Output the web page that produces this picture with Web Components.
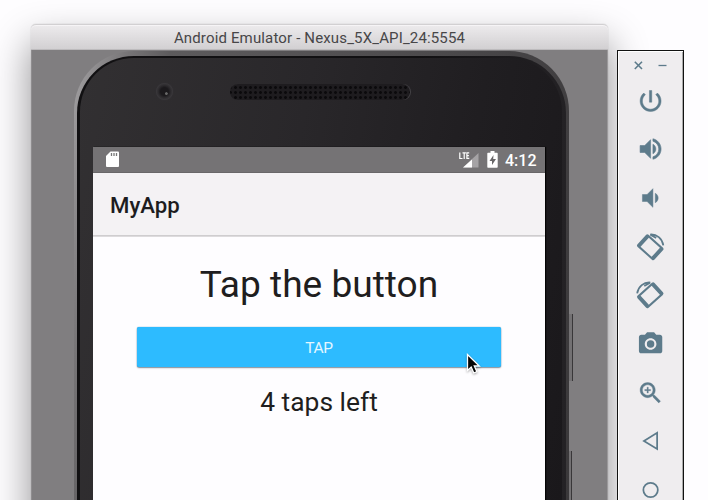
<!DOCTYPE html>
<html lang="en"><head><meta charset="utf-8"><title>Android Emulator</title>
<style>
html,body{margin:0;height:500px;overflow:hidden;background:#fefdff;font-family:Roboto,"Liberation Sans",sans-serif}
</style></head><body>
<emulator-desktop>
<emulator-window slot="window" heading="Android Emulator - Nexus_5X_API_24:5554">
<phone-device><status-bar slot="screen" time="4:12"></status-bar><app-bar slot="screen">MyApp</app-bar><tap-view slot="screen"></tap-view></phone-device>
</emulator-window>
<emulator-toolbar slot="tools"></emulator-toolbar>
<mouse-pointer slot="pointer"></mouse-pointer>
</emulator-desktop>
<script>
function define(name, html, setup){
  customElements.define(name, class extends HTMLElement{
    constructor(){super();const t=document.createElement('template');t.innerHTML=html;this.attachShadow({mode:'open'}).append(t.content.cloneNode(true));}
    connectedCallback(){if(setup)setup(this,this.shadowRoot);}
  });
}
define('emulator-desktop',`<style>
:host{display:flex;align-items:flex-start;gap:9px;box-sizing:border-box;width:708px;height:500px;padding:24px 0 0 31px;overflow:hidden;position:relative;background:#fefdff}
.tools{margin-top:26px;position:relative;z-index:1}
</style><slot name="window"></slot><div class="tools"><slot name="tools"></slot></div><slot name="pointer"></slot>`);

define('emulator-window',`<style>
:host{display:flex;flex-direction:column;flex:none;width:577px;height:620px;border-radius:5px 5px 0 0;box-shadow:0 0 1px #0005,0 19px 38px 1px #0000006b}
header{height:26px;box-sizing:border-box;border-top:1px solid #d2d0d2;border-bottom:1px solid #bdbbbd;border-radius:5px 5px 0 0;background:linear-gradient(#edebed,#d2d0d2);box-shadow:inset 0 1px #f6f4f6;display:flex;justify-content:center;align-items:center;padding-top:2px;color:#474648;font-size:15px;letter-spacing:.15px;white-space:nowrap}
main{flex:1;background:#807e80;display:flex;padding:1px 0 0 43px;box-shadow:inset 1px 0 #8f8d8f,inset -1px 0 #9b999b}
</style><header><span></span></header><main><slot></slot></main>`,(e,r)=>r.querySelector('span').textContent=e.getAttribute('heading'));

define('phone-device',`<style>
:host{display:block;width:495px;height:590px;position:relative}
.rim{box-sizing:border-box;height:100%;padding:5px 3px 0 3px;border-radius:60px 60px 0 0;background:linear-gradient(100deg,#a3a1a3 0,#777577 9%,#5d5b5d 16%,#4c4a4c 60%,#383638)}
.edge{box-sizing:border-box;height:100%;padding:2px 4px 0 3px;background:linear-gradient(90deg,#111012 0 70%,#242225);border-radius:57px 57px 0 0}
.face{box-sizing:border-box;height:100%;background:linear-gradient(100deg,#323032,#29272a 40%,#201e21 70%,#19171a);border-radius:54px 54px 0 0;display:flex;flex-direction:column}
.sensors{height:89px;flex:none;display:flex;align-items:flex-start;padding:24px 0 0 75px;box-sizing:border-box}
.camera{width:19px;height:19px;border-radius:50%;background:radial-gradient(circle at 60% 61%,#666 0 1px,#0000 1.7px),radial-gradient(circle,#1b191c 0 4px,#2b292c 6px,#383639 8px,#302e31 9px);margin-right:56px}
.speaker{width:180px;height:16px;margin-top:2px;border-radius:8px;background:radial-gradient(circle,#0b0a0c 1px,#0000 1.8px) 3px 1px/5px 5px,#1e1c1f;box-shadow:1px 0 #444246}
.screen{display:flex;flex-direction:column;flex:1;margin:0 17px 0 13px;background:#fefdff;box-shadow:1px 0 1px #050505}
.key{position:absolute;box-sizing:border-box;left:495px;width:4px;background:#737173;border-right:1px solid #393739}
.a{top:263px;height:67px}.b{top:400px;height:190px;width:3px}
</style><div class="rim"><div class="edge"><div class="face"><div class="sensors"><div class="camera"></div><div class="speaker"></div></div><div class="screen"><slot name="screen"></slot></div></div></div></div><i class="key a"></i><i class="key b"></i>`);

define('status-bar',`<style>
:host{display:flex;align-items:center;height:26px;box-sizing:border-box;padding:0 9px 0 13px;background:#757375;color:#fff;border-bottom:1px solid #696769}
svg{display:block;flex:none}.space{flex:1}.bat{margin:0 7px 0 8px}span{font-size:16px;font-weight:500;line-height:26px;padding-top:2px;margin-right:-.5px}
</style>
<svg width="13" height="17" viewBox="0 0 13 17"><path d="M4.500.5H12q1 0 1 1V15q0 1-1 1H1q-1 0-1-1V5Z" fill="#fff"/><path d="M5.500 2v3M8 2v3M10.500 2v3" stroke="#777" stroke-width="1.300"/></svg>
<div class="space"></div>
<svg width="20" height="18" viewBox="0 0 20 18"><path d="M19.500 2v14.500H4Z" fill="#a5a3a5"/><path d="M13 8.500V16.500H4Z" fill="#fff"/><path d="M.8 1.500v6h2.700M3.500 1.900h3.400M5.200 1.900v6M10.200 1.900H7.900v5.500h2.400M7.900 4.600h2" fill="none" stroke="#fff" stroke-width="1.200"/></svg>
<svg class="bat" width="11" height="17" viewBox="0 0 11 17"><path d="M3.500 0h4v1.800H10q.7 0 .7.7V16q0 .7-.7.7H1q-.7 0-.7-.7V2.500q0-.7.7-.7h2.500Z" fill="#fff"/><path d="M6.500 4 2.500 10H5v4l4-6H6.200Z" fill="#686668"/></svg><span></span>`,(e,r)=>r.querySelector('span').textContent=e.getAttribute('time'));

define('app-bar',`<style>
:host{display:flex;align-items:center;height:64px;box-sizing:border-box;padding:0 17px 1px;background:linear-gradient(#f4f2f4 62px,#cfcdcf 62px 63px,#dddbdd 63px);color:#1d1c1e;font-size:22.200px;font-weight:500}
</style><slot></slot>`);

define('tap-view',`<style>
:host{display:flex;flex-direction:column;align-items:center;color:#1f1e20;padding-top:25px}
h1{font-size:37.100px;line-height:46px;font-weight:400;margin:0;white-space:nowrap}
button{width:364px;height:40px;margin:19px 0 0;padding:2px 0 0;border:0;border-radius:2px;background:#2dbbff;color:#e5f7ff;font:400 15.500px Roboto,sans-serif;letter-spacing:-.3px;box-shadow:0 0 1px #2189bd,0 1px 1.500px #8c8b91}
p{margin:18px 0 0;font-size:26.400px;line-height:34px}
</style><h1>Tap the button</h1><button>TAP</button><p>4 taps left</p>`);

const rotate='<g transform="translate(11.700 12.200) rotate(42)"><path fill-rule="evenodd" d="M-8.200-7H8.200q1.600 0 1.600 1.600V5.400Q9.800 7 8.200 7h-16.400Q-9.800 7-9.800 5.400V-5.400Q-9.800-7-8.200-7ZM-6.400-5.300V5.300H6.400V-5.300Z"/></g><path d="M11.600 1.300c5.600-.500 10.400 3.500 11.300 9.300M11.800 1.500l5 2.700" fill="none" stroke="currentColor" stroke-width="1.500"/>';
const icons=[
'<path d="M13 3h-2v10h2V3zm4.830 2.170-1.420 1.420C17.990 7.860 19 9.810 19 12c0 3.870-3.130 7-7 7s-7-3.130-7-7c0-2.190 1.010-4.140 2.580-5.420L6.170 5.170C4.230 6.820 3 9.260 3 12c0 4.970 4.030 9 9 9s9-4.030 9-9c0-2.740-1.230-5.180-3.170-6.830z" stroke="currentColor" stroke-width=".4"/>',
'<path d="M3 9v6h4l5 5V4L7 9H3zm13.500 3c0-1.770-1.020-3.290-2.500-4.030v8.050c1.480-.730 2.500-2.250 2.500-4.020zM14 3.230v2.060c2.890.860 5 3.540 5 6.710s-2.110 5.850-5 6.710v2.060c4.010-.910 7-4.490 7-8.770s-2.990-7.860-7-8.770z" stroke="currentColor" stroke-width=".5"/>',
'<path d="M18.500 12c0-1.770-1.020-3.290-2.500-4.030v8.050c1.480-.730 2.500-2.250 2.500-4.020zM5 9v6h4l5 5V4L9 9H5z" stroke="currentColor" stroke-width=".4"/>',
rotate,
'<g transform="translate(23.400 0) scale(-1 1)">'+rotate+'</g>',
'<circle cx="12" cy="12" r="3.200"/><path d="M9 2 7.170 4H4c-1.100 0-2 .900-2 2v12c0 1.100.900 2 2 2h16c1.100 0 2-.900 2-2V6c0-1.100-.900-2-2-2h-3.170L15 2H9zm3 15c-2.760 0-5-2.240-5-5s2.240-5 5-5 5 2.240 5 5-2.240 5-5 5z"/>',
'<path d="M15.500 14h-.790l-.280-.270C15.410 12.590 16 11.110 16 9.500 16 5.910 13.090 3 9.500 3S3 5.910 3 9.500 5.910 16 9.500 16c1.610 0 3.090-.590 4.230-1.570l.270.280v.790l5 4.990L20.490 19l-4.990-5zm-6 0C7.010 14 5 11.990 5 9.500S7.010 5 9.500 5 14 7.010 14 9.500 11.990 14 9.500 14zm2.500-4h-2v2H9v-2H7V9h2V7h1v2h2v1z" stroke="currentColor" stroke-width=".3"/>',
'<path d="M17.600 5v13.800L6.300 11.900Z" fill="none" stroke="currentColor" stroke-width="1.500"/>',
'<circle cx="12" cy="12" r="6.200" fill="none" stroke="currentColor" stroke-width="1.500"/>'];
define('tool-icon',`<style>:host{display:flex;height:48.650px;align-items:center;justify-content:center}svg{width:28px;height:28px;overflow:visible;fill:currentColor}</style><svg viewBox="0.35 0 24 24"></svg>`,(e,r)=>r.querySelector('svg').innerHTML=icons[+e.getAttribute('index')]);
define('emulator-toolbar',`<style>
:host{display:flex;flex-direction:column;box-sizing:border-box;width:67px;height:600px;border:1px solid #111;background:#efedef;color:#5d7b8b;box-shadow:inset 1px 1px #fff,inset -1px 0 #aaa}
.controls{display:flex;height:25.500px;padding:10px 0 0 16px;box-sizing:border-box;gap:15px}svg{display:block;flex:none}
</style><div class="controls"><svg width="9" height="9" viewBox="0 0 9 9"><path d="m.8.8 7.200 7.200M8 .8.8 8" stroke="currentColor" stroke-width="1.600"/></svg><svg width="9" height="9" viewBox="0 0 9 9"><path d="M.5 4.500h8" stroke="currentColor" stroke-width="1.300"/></svg></div>${icons.map((_,i)=>`<tool-icon index="${i}"></tool-icon>`).join('')}`);
define('mouse-pointer',`<style>:host{display:block;position:absolute;left:466px;top:353px;z-index:3}svg{display:block;filter:drop-shadow(0 1px 1px #0005)}</style><svg width="15" height="22" viewBox="0 0 15 22"><path d="M1.500 1.500v16l3.700-3.500 2.600 6 3.100-1.300-2.600-5.700h5Z" fill="#050505" stroke="#fff" stroke-width="1.300"/></svg>`);
</script></body></html>
